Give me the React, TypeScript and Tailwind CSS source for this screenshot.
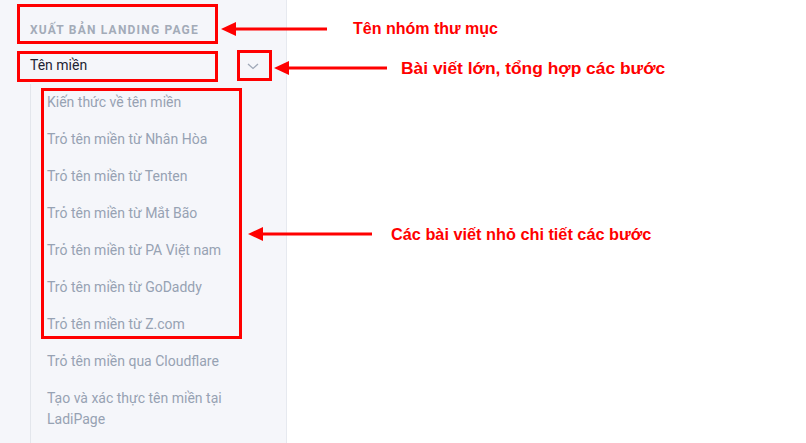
import React from 'react';

const items = [
  'Kiến thức về tên miền',
  'Trỏ tên miền từ Nhân Hòa',
  'Trỏ tên miền từ Tenten',
  'Trỏ tên miền từ Mắt Bão',
  'Trỏ tên miền từ PA Việt nam',
  'Trỏ tên miền từ GoDaddy',
  'Trỏ tên miền từ Z.com',
  'Trỏ tên miền qua Cloudflare',
  'Tạo và xác thực tên miền tại LadiPage',
];

const Arrow = ({ length }: { length: number }) => (
  <svg width={length} height="16" viewBox={`0 0 ${length} 16`} className="shrink-0">
    <line x1={12} y1={8} x2={length} y2={8} stroke="#ff0000" strokeWidth={3} />
    <polygon points={`0,8 15,1 15,15`} fill="#ff0000" />
  </svg>
);

const Note = ({ className, length, gap, size, children }: { className: string; length: number; gap: string; size: string; children: React.ReactNode }) => (
  <div className={`absolute flex items-center ${gap} ${className}`}>
    <Arrow length={length} />
    <span className={`${size} font-bold text-[#ff0000] leading-[20px] whitespace-nowrap font-['Liberation_Sans',Arial,sans-serif]`}>
      {children}
    </span>
  </div>
);

const App = () => {
  return (
    <div className="relative w-[806px] h-[443px] overflow-hidden bg-white font-['Roboto',sans-serif]">
      {/* Sidebar */}
      <aside className="w-[287px] h-full bg-[#f5f6fa] border-r border-[#e6e9ef] pl-[30px] pr-[16px]">
        <div className="pt-[22px] pb-[9px] text-[12px] font-bold tracking-[1.2px] text-[#a3abb8] leading-[16px]">
          XUẤT BẢN LANDING PAGE
        </div>
        <div className="flex items-center justify-between h-[37px] pr-[11px]">
          <span className="text-[14px] text-[#1e2433]">Tên miền</span>
          <svg width="12" height="8" viewBox="0 0 12 8">
            <path d="M1 2 L6 6.5 L11 2" fill="none" stroke="#a0a9b8" strokeWidth="1.3" />
          </svg>
        </div>
        <ul className="border-l border-[#e3e6ec] pl-[16px] pr-[20px] h-[400px]">
          {items.map((item) => (
            <li key={item} className="py-[8px] text-[14px] leading-[21px] text-[#97a2b3]">
              {item}
            </li>
          ))}
        </ul>
      </aside>

      {/* Annotation boxes */}
      <div className="absolute left-[17px] top-[4px] w-[201px] h-[40px] border-[3px] border-[#ff0000]" />
      <div className="absolute left-[17px] top-[51px] w-[201px] h-[31px] border-[3px] border-[#ff0000]" />
      <div className="absolute left-[237px] top-[50px] w-[35px] h-[31px] border-[3px] border-[#ff0000]" />
      <div className="absolute left-[41px] top-[88px] w-[201px] h-[251px] border-[3px] border-[#ff0000]" />

      {/* Annotation arrows and labels */}
      <Note className="left-[221px] top-[19px]" length={106} gap="gap-[26px]" size="text-[16px]">
        Tên nhóm thư mục
      </Note>
      <Note className="left-[274px] top-[58px]" length={113} gap="gap-[14px]" size="text-[17.4px]">
        Bài viết lớn, tổng hợp các bước
      </Note>
      <Note className="left-[248px] top-[224px]" length={124} gap="gap-[19px]" size="text-[16.3px]">
        Các bài viết nhỏ chi tiết các bước
      </Note>
    </div>
  );
};

export default App;
